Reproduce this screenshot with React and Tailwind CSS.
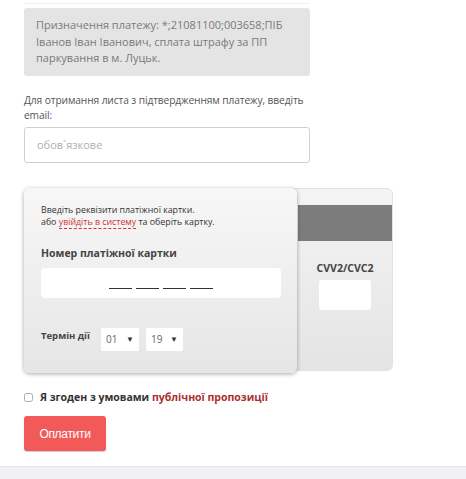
import { useState } from "react";

const Payment = () => {
  const [agree, setAgree] = useState(false);

  return (
    <div className="min-h-[479px] bg-white flex flex-col" style={{ fontFamily: '"Open Sans", sans-serif' }}>
      <div className="flex-1 pl-6 pt-[3px]">
        <div className="w-[286px] border-t border-[#f0f0f0]" />

        {/* Payment purpose */}
        <div className="w-[286px] mt-[4px] rounded-[3px] bg-[#e4e4e4] px-3 pt-[9px] pb-[9px] text-[11px] leading-[16.5px] text-[#7a7a7a]">
          Призначення платежу: *;21081100;003658;ПІБ Іванов Іван Іванович, сплата штрафу за ПП паркування в м. Луцьк.
        </div>

        {/* Email */}
        <p className="mt-[17px] w-[300px] text-[10.2px] leading-[15px] text-[#555] tracking-[-0.1px]">
          Для отримання листа з підтвердженням платежу, введіть email:
        </p>
        <input
          className="mt-[4px] block w-[286px] h-[36px] rounded-[3px] border border-[#d0d0d0] px-3 text-[11px] text-[#555] placeholder:text-[#b0b0b0] outline-none"
          placeholder="обов`язкове"
        />

        {/* Card */}
        <div className="mt-[25px] flex items-start">
          <div className="relative z-10 w-[273px] h-[185px] rounded-[6px] bg-gradient-to-b from-[#f7f7f7] to-[#e6e6e6] shadow-[0_1px_4px_rgba(0,0,0,0.35)] pl-[17px] pr-[16px] pt-[16px]">
            <p className="text-[8.8px] leading-[12px] text-[#333]">
              Введіть реквізити платіжної картки.
              <br />
              або{" "}
              <span className="text-[#d0333a] border-b border-dashed border-[#d0333a]">увійдіть в систему</span> та оберіть картку.
            </p>
            <p className="mt-[17px] text-[10.5px] leading-[16px] font-bold text-[#444]">Номер платіжної картки</p>
            <div className="mt-[7px] h-[30px] rounded-[4px] bg-white flex items-end justify-center gap-[4px] pb-[9px]">
              <span className="w-[23px] border-b border-[#333]" />
              <span className="w-[23px] border-b border-[#333]" />
              <span className="w-[23px] border-b border-[#333]" />
              <span className="w-[23px] border-b border-[#333]" />
            </div>
            <div className="mt-[31px] flex items-start">
              <span className="text-[9.5px] font-bold text-[#444] w-[59px]">Термін дії</span>
              <div className="flex gap-[5px] mt-[-2px]">
                <div className="w-[40px] h-[25px] bg-white border border-[#e8e8e8] rounded-[2px] flex items-center justify-between px-[5px] text-[10px] text-[#666]">
                  <span>01</span>
                  <span className="text-[8px] text-[#333]">▼</span>
                </div>
                <div className="w-[39px] h-[25px] bg-white border border-[#e8e8e8] rounded-[2px] flex items-center justify-between px-[5px] text-[10px] text-[#666]">
                  <span>19</span>
                  <span className="text-[8px] text-[#333]">▼</span>
                </div>
              </div>
            </div>
          </div>

          <div className="w-[108px] -ml-[12px] h-[183px] rounded-[6px] bg-gradient-to-b from-[#f4f4f4] to-[#e4e4e4] border border-[#e2e2e2] pt-[16px] pl-[12px] flex flex-col">
            <div className="h-[36px] bg-[#7c7c7c]" />
            <p className="mt-[20px] text-center text-[10.5px] font-bold text-[#444]">CVV2/CVC2</p>
            <div className="mt-[4px] mx-auto w-[52px] h-[30px] rounded-[3px] bg-white" />
          </div>
        </div>

        {/* Agreement */}
        <label className="mt-[17px] flex items-center gap-[7px] text-[10.5px] font-bold text-[#333]">
          <input
            type="checkbox"
            checked={agree}
            onChange={() => setAgree(!agree)}
            className="w-[9px] h-[9px] m-0 opacity-60"
          />
          <span>
            Я згоден з умовами <span className="text-[#a8302f]">публічної пропозиції</span>
          </span>
        </label>

        <button className="mt-[11px] w-[82px] h-[35px] rounded-[3px] bg-[#f25a5a] text-white text-[12px] tracking-[-0.3px] shadow-[0_1px_1px_rgba(0,0,0,0.2)]" style={{ fontFamily: '"Liberation Sans", Arial, sans-serif' }}>
          Оплатити
        </button>
      </div>

      <div className="h-[13px] bg-[#f0f0f5] border-t border-[#e6e6ee]" />
    </div>
  );
};

export default Payment;
